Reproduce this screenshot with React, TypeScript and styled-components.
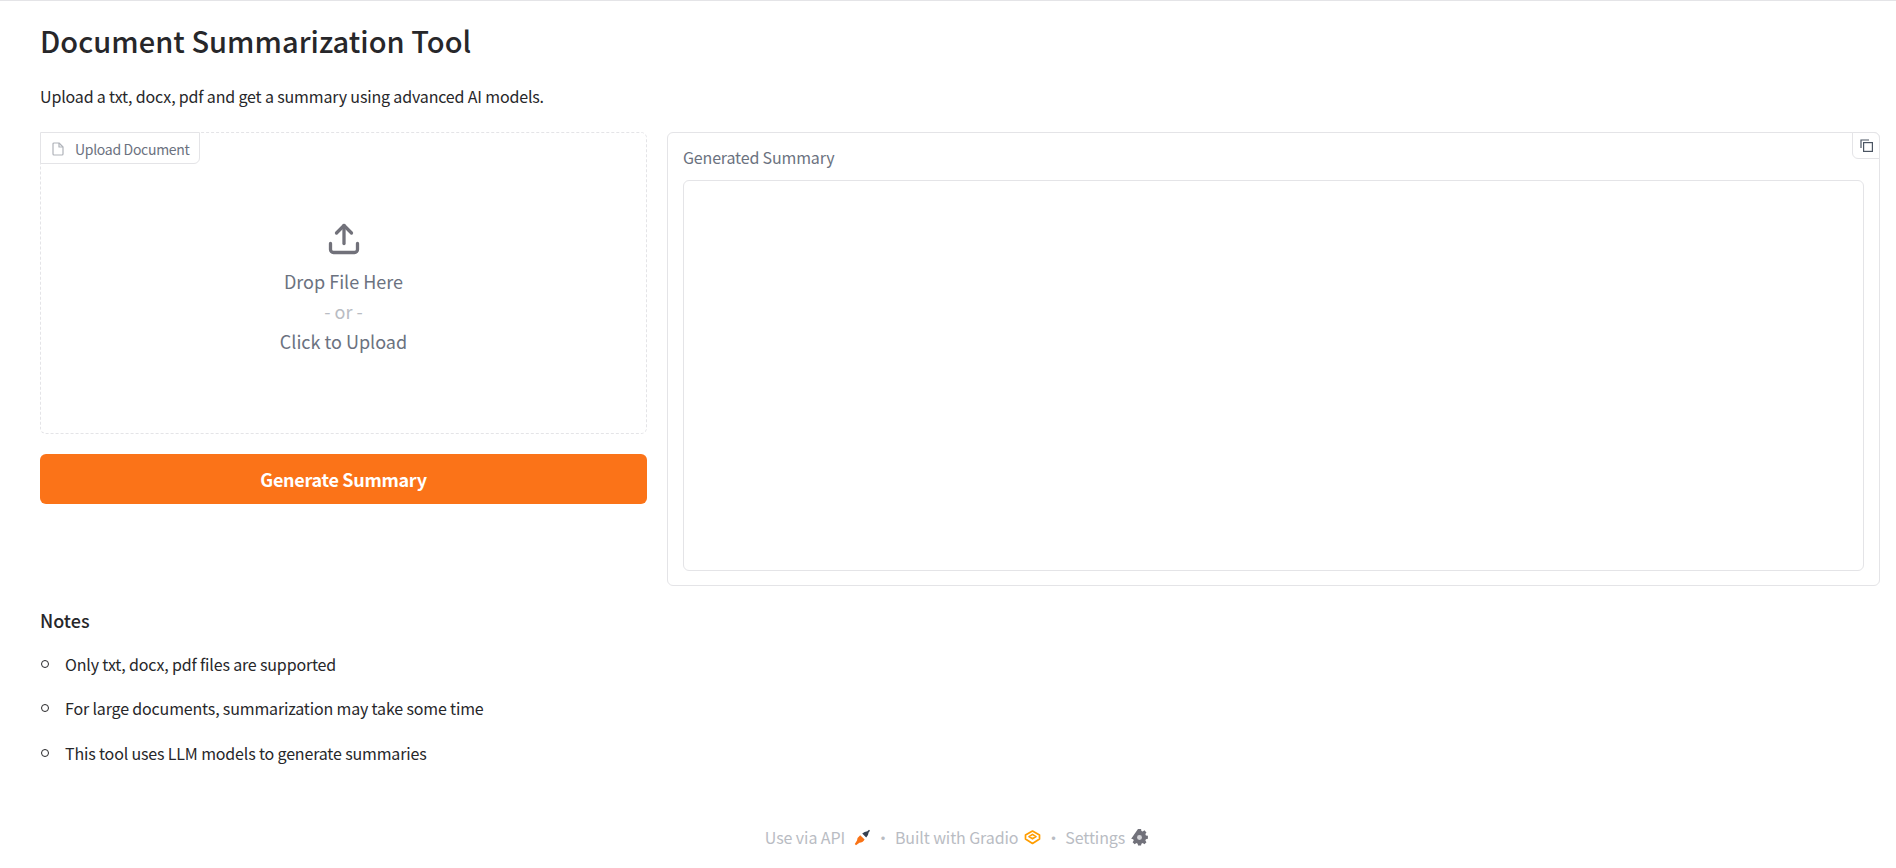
import React from 'react';
import styled, {createGlobalStyle} from "styled-components";

const notes = [
    "Only txt, docx, pdf files are supported",
    "For large documents, summarization may take some time",
    "This tool uses LLM models to generate summaries",
];

const App = () => {
    return (
        <>
            <GlobalStyle/>
            <Page>
                <Main>
                    <Title>Document Summarization Tool</Title>
                    <Intro>Upload a txt, docx, pdf and get a summary using advanced AI models.</Intro>
                    <Columns>
                        <LeftColumn>
                            <UploadBox>
                                <UploadLabel>
                                    <FileIcon/>
                                    Upload Document
                                </UploadLabel>
                                <DropArea>
                                    <UploadIcon/>
                                    <DropText>Drop File Here</DropText>
                                    <OrText>- or -</OrText>
                                    <DropText>Click to Upload</DropText>
                                </DropArea>
                            </UploadBox>
                            <GenerateButton>Generate Summary</GenerateButton>
                        </LeftColumn>
                        <SummaryPanel>
                            <CopyButton>
                                <CopyIcon/>
                            </CopyButton>
                            <SummaryLabel>Generated Summary</SummaryLabel>
                            <SummaryArea/>
                        </SummaryPanel>
                    </Columns>
                    <NotesTitle>Notes</NotesTitle>
                    <NotesList>
                        {notes.map(note => <li key={note}>{note}</li>)}
                    </NotesList>
                </Main>
                <Footer>
                    <FooterLink $gap={9}>Use via API <RocketIcon/></FooterLink>
                    <Dot>·</Dot>
                    <FooterLink>Built with Gradio <GradioIcon/></FooterLink>
                    <Dot>·</Dot>
                    <FooterLink>Settings <GearIcon/></FooterLink>
                </Footer>
            </Page>
        </>
    );
};

export default App;

const FileIcon = () => (
    <svg width="12" height="14" viewBox="0 0 24 28" fill="none" stroke="#b0b3ba" strokeWidth="2.4" strokeLinejoin="round">
        <path d="M14 2H4a2 2 0 0 0-2 2v20a2 2 0 0 0 2 2h16a2 2 0 0 0 2-2V10z"/>
        <path d="M14 2v8h8"/>
    </svg>
);

const UploadIcon = () => (
    <svg width="36" height="36" viewBox="0 0 24 24" fill="none" stroke="#71717a" strokeWidth="2.2" strokeLinecap="round" strokeLinejoin="round">
        <path d="M3 15v4a2 2 0 0 0 2 2h14a2 2 0 0 0 2-2v-4"/>
        <path d="M17 8l-5-5-5 5"/>
        <path d="M12 3v12"/>
    </svg>
);

const CopyIcon = () => (
    <svg width="13" height="13" viewBox="0 0 13 13" fill="none" stroke="#4b5563" strokeWidth="1.2">
        <rect x="3.6" y="3.6" width="8.8" height="8.8"/>
        <path d="M9 1H1v8"/>
    </svg>
);

const RocketIcon = () => (
    <svg width="17" height="17" viewBox="0 0 17 17">
        <path d="M8.2 4.6 Q10.5 2.6 13.4 2.2 L15 .8 L16 1.8 L14.6 3.4 Q14.4 6.4 12.2 8.6z" fill="#374151"/>
        <path d="M6.2 6.2 L10.6 10.6 Q8.6 13.8 5.4 13.8 L2 16.2 L.8 15 L3 11.4 Q3.2 8.4 6.2 6.2z" fill="#f97316"/>
    </svg>
);

const GradioIcon = () => (
    <svg width="17" height="17" viewBox="0 0 17 17" fill="none" stroke="#ff9d00" strokeWidth="1.7" strokeLinejoin="round">
        <path d="M8.5 2 L15.5 6 L15.5 10 L8.5 14.5 L1.5 10 L1.5 6z"/>
        <path d="M8.5 5.4 L12 7.6 L8.5 9.8 L5 7.6z"/>
    </svg>
);

const GearIcon = () => (
    <svg width="17" height="17" viewBox="0 0 24 24">
        <path fill="#71717a" fillRule="evenodd" d="M9.6 1h4.8l.6 3.2 2.1.9 2.7-1.8 3.3 3.3-1.8 2.7.9 2.1 3.2.6v4.8l-3.2.6-.9 2.1 1.8 2.7-3.3 3.3-2.7-1.8-2.1.9-.6 3.2H9.6L9 24.6l-2.1-.9-2.7 1.8-3.3-3.3 1.8-2.7-.9-2.1-3.2-.6" transform="translate(1.5 -1) scale(.88)"/>
        <circle cx="12" cy="12" r="3.5" fill="#d4d4d8"/>
    </svg>
);

const GlobalStyle = createGlobalStyle`
    * {
        box-sizing: border-box;
    }
    body {
        margin: 0;
        background: #fff;
        color: #27272a;
        font-family: "Noto Sans CJK SC", "Noto Sans", sans-serif;
    }
`
const Page = styled.div`
    height: 868px;
    border-top: 1px solid #e4e4e7;
    display: flex;
    flex-direction: column;
`
const Main = styled.main`
    flex: 1;
    padding: 0 16px 0 40px;
`
const Title = styled.h1`
    margin: 20px 0 0;
    font-size: 29px;
    font-weight: 500;
    line-height: 38px;
    letter-spacing: 0.05px;
    color: #27272a;
`
const Intro = styled.p`
    margin: 25px 0 0;
    font-size: 16px;
    line-height: 24px;
    letter-spacing: -0.16px;
    color: #27272a;
`
const Columns = styled.div`
    display: flex;
    gap: 20px;
    margin-top: 24px;
`
const LeftColumn = styled.div`
    width: 607px;
    flex-shrink: 0;
    display: flex;
    flex-direction: column;
    gap: 20px;
`
const UploadBox = styled.div`
    height: 302px;
    border: 1px dashed #e4e4e7;
    border-radius: 6px;
    display: flex;
    flex-direction: column;
`
const UploadLabel = styled.div`
    align-self: flex-start;
    height: 32px;
    display: flex;
    align-items: center;
    gap: 11px;
    padding: 1px 9px 0 11px;
    margin: -1px 0 0 -1px;
    background: #fff;
    border: 1px solid #e4e4e7;
    border-radius: 0 0 6px 0;
    font-size: 14px;
    letter-spacing: -0.3px;
    color: #6b7280;
`
const DropArea = styled.div`
    flex: 1;
    display: flex;
    flex-direction: column;
    align-items: center;
    padding-top: 57px;

    svg {
        margin-bottom: 9px;
    }
`
const DropText = styled.div`
    font-size: 18px;
    line-height: 30px;
    color: #6b7280;
`
const OrText = styled(DropText)`
    color: #b9bcc3;
`
const GenerateButton = styled.button`
    height: 50px;
    border: none;
    border-radius: 6px;
    background: #fb7318;
    color: #fff;
    font-family: inherit;
    font-size: 18px;
    font-weight: 600;
    letter-spacing: -0.3px;
`
const SummaryPanel = styled.section`
    position: relative;
    flex: 1;
    height: 454px;
    padding: 12px 15px 14px;
    border: 1px solid #e4e4e7;
    border-radius: 6px;
    display: flex;
    flex-direction: column;
`
const CopyButton = styled.div`
    position: absolute;
    top: -1px;
    right: -1px;
    width: 28px;
    height: 27px;
    display: flex;
    align-items: center;
    justify-content: center;
    background: #fff;
    border: 1px solid #e4e4e7;
    border-radius: 0 6px 0 6px;
`
const SummaryLabel = styled.div`
    font-size: 16px;
    line-height: 24px;
    letter-spacing: -0.16px;
    color: #6b7280;
`
const SummaryArea = styled.div`
    flex: 1;
    margin-top: 11px;
    border: 1px solid #e4e4e7;
    border-radius: 6px;
`
const NotesTitle = styled.h3`
    margin: 21px 0 0;
    font-size: 18px;
    font-weight: 500;
    line-height: 26px;
    color: #27272a;
`
const NotesList = styled.ul`
    list-style: none;
    margin: 19px 0 0;
    padding: 0;
    font-size: 16px;
    line-height: 24px;
    letter-spacing: -0.16px;
    color: #27272a;

    li {
        display: flex;
        align-items: center;
        gap: 16px;
        margin-bottom: 20.4px;
    }

    li::before {
        content: "";
        width: 6px;
        height: 6px;
        margin-left: 1px;
        border: 1px solid #27272a;
        border-radius: 50%;
    }
`
const Footer = styled.footer`
    height: 60px;
    padding: 0 0 19px 17px;
    display: flex;
    align-items: flex-end;
    justify-content: center;
    font-size: 16px;
    line-height: 24px;
    letter-spacing: -0.1px;
    color: #b9bcc3;
`
const FooterLink = styled.span<{ $gap?: number }>`
    display: inline-flex;
    align-items: center;
    gap: ${props => props.$gap ?? 6}px;
`
const Dot = styled.span`
    margin: 0 4px;
`
